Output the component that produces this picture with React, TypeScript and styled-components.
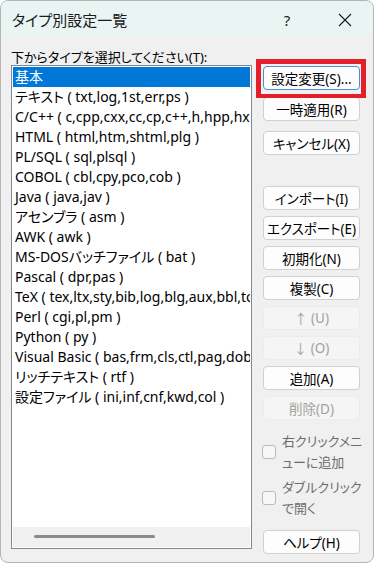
import React from 'react'
import styled, { createGlobalStyle } from 'styled-components'

const GlobalStyle = createGlobalStyle`
  html, body {
    margin: 0;
    padding: 0;
    background: #ffffff;
  }
  body {
    font-family: "Noto Sans", "Noto Sans CJK JP", sans-serif;
    font-feature-settings: "palt";
  }
`

type ListItem = { label: string; exts?: string }

const items: ListItem[] = [
  { label: '基本' },
  { label: 'テキスト', exts: 'txt,log,1st,err,ps' },
  { label: 'C/C++', exts: 'c,cpp,cxx,cc,cp,c++,h,hpp,hxx,hh,hp,h++' },
  { label: 'HTML', exts: 'html,htm,shtml,plg' },
  { label: 'PL/SQL', exts: 'sql,plsql' },
  { label: 'COBOL', exts: 'cbl,cpy,pco,cob' },
  { label: 'Java', exts: 'java,jav' },
  { label: 'アセンブラ', exts: 'asm' },
  { label: 'AWK', exts: 'awk' },
  { label: 'MS-DOSバッチファイル', exts: 'bat' },
  { label: 'Pascal', exts: 'dpr,pas' },
  { label: 'TeX', exts: 'tex,ltx,sty,bib,log,blg,aux,bbl,toc,lof,lot,idx,ind,glo' },
  { label: 'Perl', exts: 'cgi,pl,pm' },
  { label: 'Python', exts: 'py' },
  { label: 'Visual Basic', exts: 'bas,frm,cls,ctl,pag,dob,dsr,vb' },
  { label: 'リッチテキスト', exts: 'rtf' },
  { label: '設定ファイル', exts: 'ini,inf,cnf,kwd,col' },
]

type ButtonSpec = { text: string; gap: number; disabled?: boolean; primary?: boolean; arrow?: string }

const buttons: ButtonSpec[] = [
  { text: '設定変更(S)...', gap: 0, primary: true },
  { text: '一時適用(R)', gap: 7 },
  { text: 'キャンセル(X)', gap: 10 },
  { text: 'インポート(I)', gap: 31 },
  { text: 'エクスポート(E)', gap: 6 },
  { text: '初期化(N)', gap: 6 },
  { text: '複製(C)', gap: 6 },
  { text: ' (U)', arrow: '↑', gap: 6, disabled: true },
  { text: ' (O)', arrow: '↓', gap: 6, disabled: true },
  { text: '追加(A)', gap: 6 },
  { text: '削除(D)', gap: 6, disabled: true },
]

export default function App() {
  return (
    <>
      <GlobalStyle />
      <Window>
        <TitleBar>
          <Title>タイプ別設定一覧</Title>
          <CaptionButton>?</CaptionButton>
          <CloseButton>
            <svg width="14" height="14" viewBox="0 0 14 14">
              <path d="M1 1 L13 13 M13 1 L1 13" stroke="#1b1b1b" strokeWidth="1.1" fill="none" />
            </svg>
          </CloseButton>
        </TitleBar>

        <Body>
          <LeftColumn>
            <FieldLabel>下からタイプを選択してください(T):</FieldLabel>
            <ListBox>
              <Rows>
                {items.map((item, i) => (
                  <Row key={i} $selected={i === 0}>
                    {item.label}
                    {item.exts && ` ( ${item.exts} )`}
                  </Row>
                ))}
              </Rows>
              <HScroll>
                <Thumb />
              </HScroll>
            </ListBox>
          </LeftColumn>

          <RightColumn>
            {buttons.map((b, i) => (
              <DialogButton
                key={i}
                $disabled={b.disabled}
                $primary={b.primary}
                style={{ marginTop: b.gap }}
              >
                {b.arrow && <Arrow>{b.arrow}</Arrow>}
                {b.text}
              </DialogButton>
            ))}

            <CheckRow $top={11}>
              <CheckBox />
              <CheckLabel>
                右クリックメニ
                <br />
                ューに追加
              </CheckLabel>
            </CheckRow>
            <CheckRow $top={4}>
              <CheckBox />
              <CheckLabel>
                ダブルクリック
                <br />
                で開く
              </CheckLabel>
            </CheckRow>

            <DialogButton style={{ marginTop: 11 }}>ヘルプ(H)</DialogButton>
          </RightColumn>
        </Body>

        <Highlight />
      </Window>
    </>
  )
}

/* ================= STYLES ================= */

const Window = styled.div`
  position: relative;
  width: 374px;
  height: 563px;
  box-sizing: border-box;
  border: 1px solid #b4b4b4;
  border-radius: 8px;
  background: #f0f0f0;
  overflow: hidden;
  display: flex;
  flex-direction: column;
`

const TitleBar = styled.div`
  height: 35px;
  flex: none;
  display: flex;
  align-items: center;
  background: #eaf4f3;
`

const Title = styled.div`
  flex: 1;
  padding-left: 11px;
  padding-top: 2px;
  font-size: 15px;
  color: #1a1a1a;
  font-family: "Noto Sans CJK JP", sans-serif;
`

const CaptionButton = styled.div`
  width: 46px;
  height: 35px;
  display: flex;
  align-items: center;
  justify-content: center;
  font-size: 15px;
  color: #1b1b1b;
  margin-right: 12px;
  padding-top: 2px;
  box-sizing: border-box;
`

const CloseButton = styled.div`
  width: 46px;
  height: 35px;
  display: flex;
  align-items: center;
  justify-content: center;
  margin-right: 5px;
  padding-top: 2px;
  box-sizing: border-box;
`

const Body = styled.div`
  flex: 1;
  display: flex;
  flex-direction: row;
  padding: 13px 0 0 10px;
`

const LeftColumn = styled.div`
  display: flex;
  flex-direction: column;
  width: 241px;
`

const FieldLabel = styled.div`
  height: 16px;
  line-height: 16px;
  font-size: 13px;
  color: #000;
  white-space: nowrap;
`

const ListBox = styled.div`
  width: 241px;
  height: 484px;
  box-sizing: border-box;
  border: 1px solid #828790;
  background: #ffffff;
  display: flex;
  flex-direction: column;
  overflow: hidden;
`

const Rows = styled.div`
  flex: 1;
  padding-top: 1px;
  overflow: hidden;
`

const Row = styled.div<{ $selected?: boolean }>`
  height: 20px;
  line-height: 20px;
  margin: 0 1px;
  padding-left: 2px;
  font-size: 14px;
  white-space: nowrap;
  overflow: hidden;
  color: ${(p) => (p.$selected ? '#ffffff' : '#000000')};
  background: ${(p) => (p.$selected ? '#0078d7' : 'transparent')};
`

const HScroll = styled.div`
  height: 20px;
  flex: none;
  margin: 0 1px 1px 1px;
  background: #f0f0f0;
  position: relative;
`

const Thumb = styled.div`
  position: absolute;
  left: 21px;
  top: 8px;
  width: 121px;
  height: 3px;
  border-radius: 2px;
  background: #8a8a8a;
`

const RightColumn = styled.div`
  display: flex;
  flex-direction: column;
  padding-top: 17px;
  margin-left: 11px;
  width: 97px;
`

const DialogButton = styled.div<{ $disabled?: boolean; $primary?: boolean }>`
  height: 24px;
  box-sizing: border-box;
  border-radius: 4px;
  display: flex;
  align-items: center;
  justify-content: center;
  font-size: 13.5px;
  white-space: pre;
  border: 1px solid
    ${(p) => (p.$disabled ? '#ececec' : p.$primary ? '#4a8fd4' : '#d0d0d0')};
  background: ${(p) => (p.$disabled ? '#f5f5f5' : '#fdfdfd')};
  color: ${(p) => (p.$disabled ? '#a2a2a2' : '#000000')};
`

const Arrow = styled.span`
  font-family: "Noto Sans CJK JP", sans-serif;
  color: inherit;
`

const CheckRow = styled.div<{ $top: number }>`
  display: flex;
  flex-direction: row;
  align-items: center;
  margin-top: ${(p) => p.$top}px;
`

const CheckBox = styled.div`
  width: 14px;
  height: 14px;
  flex: none;
  box-sizing: border-box;
  border: 1px solid #b9b9b9;
  border-radius: 3px;
  background: #f7f7f7;
  margin-left: -1px;
`

const CheckLabel = styled.div`
  margin-left: 6px;
  font-size: 13px;
  line-height: 21px;
  color: #6c6c6c;
  white-space: nowrap;
`

const Highlight = styled.div`
  position: absolute;
  left: 255px;
  top: 58px;
  width: 110px;
  height: 39px;
  box-sizing: border-box;
  border: 5px solid #e3202a;
  border-bottom-width: 4px;
  pointer-events: none;
`
